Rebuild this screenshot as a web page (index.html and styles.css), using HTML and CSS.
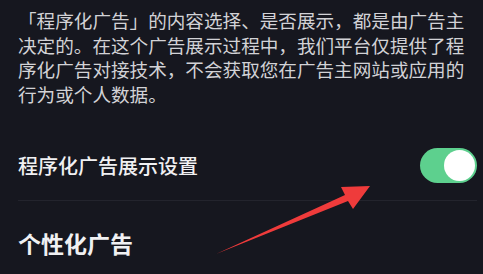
FILE: index.html
```html
<!DOCTYPE html>
<html lang="zh-CN">
<head>
    <meta charset="UTF-8">
    <meta name="viewport" content="width=device-width, initial-scale=1.0">
    <title>广告设置</title>
    <link rel="stylesheet" href="styles.css">
</head>
<body>
    <div class="page">
        <p class="intro">「程序化广告」的内容选择、是否展示，都是由广告主决定的。在这个广告展示过程中，我们平台仅提供了程序化广告对接技术，不会获取您在广告主网站或应用的行为或个人数据。</p>

        <div class="setting-row">
            <span class="setting-label">程序化广告展示设置</span>
            <div class="switch on"><div class="knob"></div></div>
        </div>

        <h2 class="section-title">个性化广告</h2>
    </div>

    <svg class="arrow" width="483" height="274" viewBox="0 0 483 274">
        <polygon points="216,254 345,195 341,187 370,186 353,209 348,201" fill="#ef3b3b"/>
    </svg>
</body>
</html>
```

FILE: styles.css
```css
body { margin: 0; background: #16171f; font-family: "Noto Sans CJK SC", "Noto Sans", sans-serif; color: #f0f0f2; position: relative; height: 274px; overflow: hidden; }
.page { padding: 0 6px 0 18px; }
.intro { margin: 0; padding: 8px 11px 0 0; font-size: 18.6px; line-height: 24.5px; color: #d2d2d6; }
.setting-row { display: flex; align-items: center; justify-content: space-between; margin-top: 25px; height: 69px; border-bottom: 1px solid #23242d; }
.setting-label { font-size: 20px; font-weight: 500; }
.switch { width: 57px; height: 35px; border-radius: 18px; background: #3a3b44; display: flex; align-items: center; padding: 0 2px; box-sizing: border-box; }
.switch.on { background: #5dd08e; justify-content: flex-end; }
.knob { width: 31px; height: 31px; border-radius: 50%; background: #fff; }
.section-title { margin: 27px 0 0; font-size: 23px; line-height: 30px; font-weight: 700; }
.arrow { position: absolute; left: 0; top: 0; }
```
